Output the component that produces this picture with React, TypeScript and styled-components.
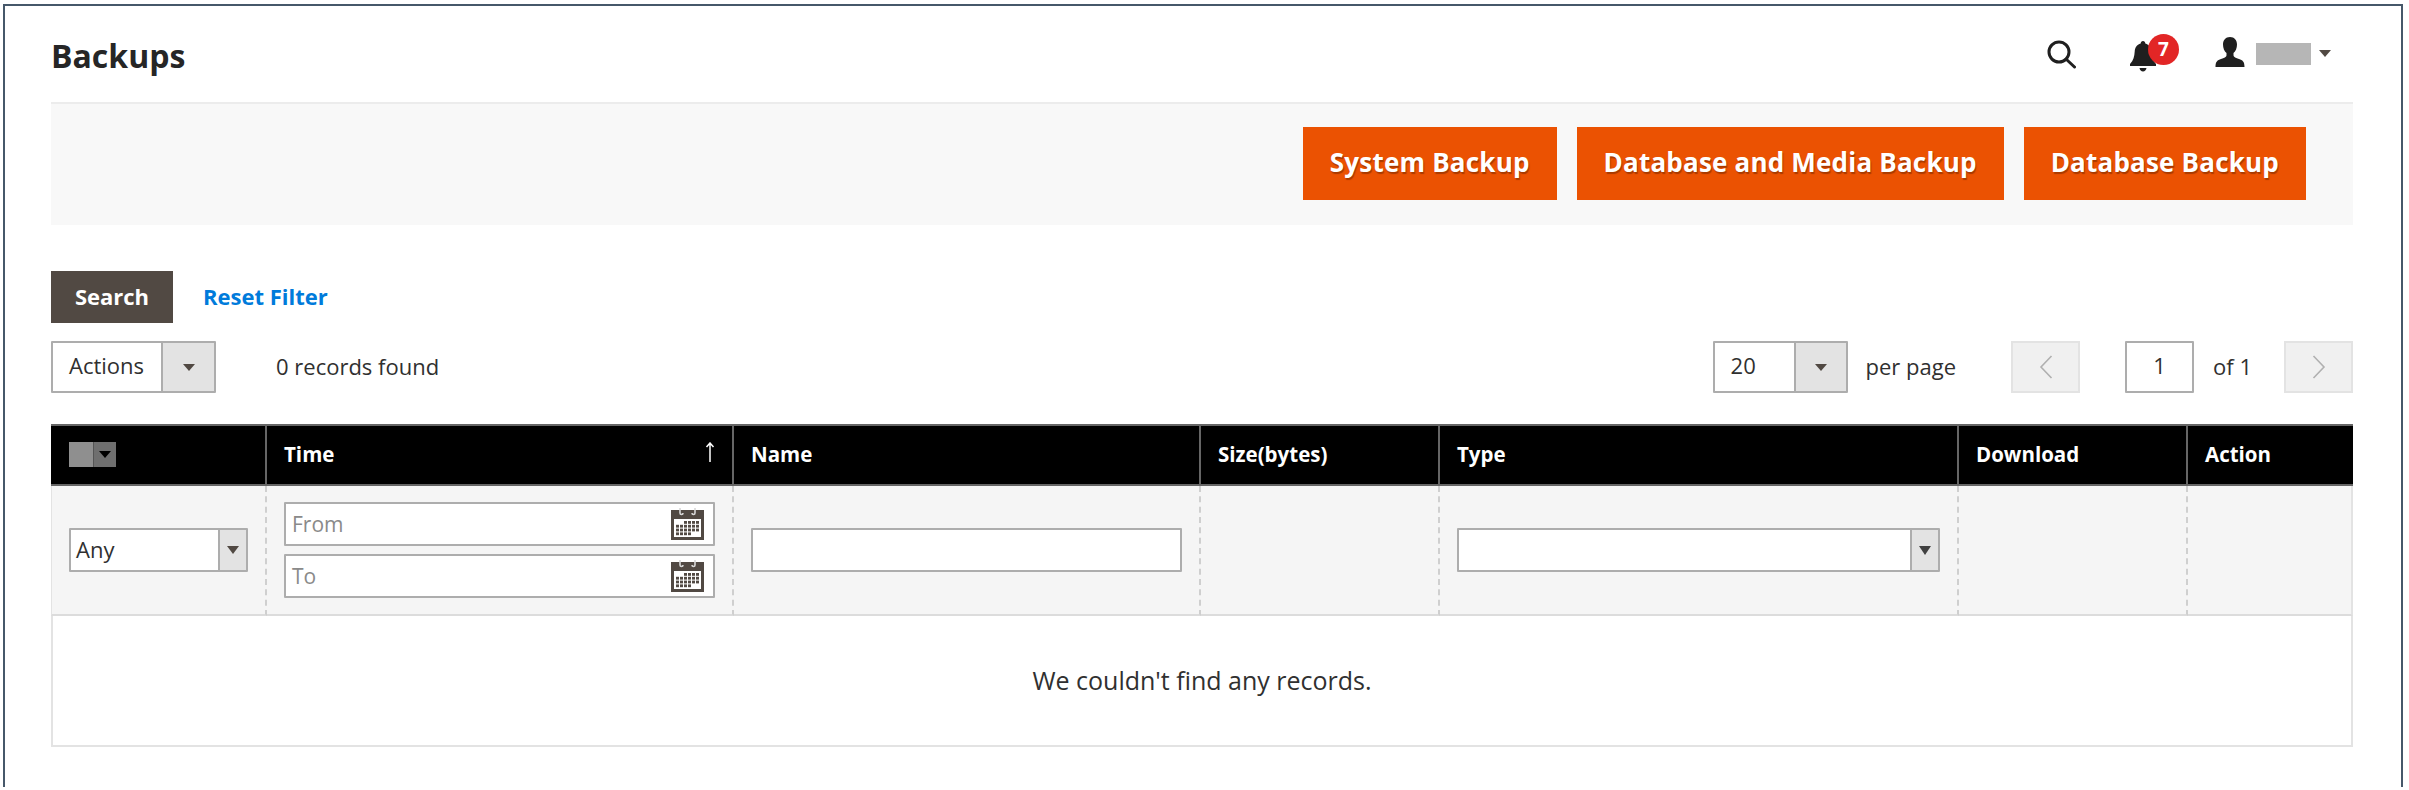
import React from "react";
import styled, { createGlobalStyle } from "styled-components";

const Global = createGlobalStyle`
  html, body { margin: 0; padding: 0; background: #fff; }
  body { font-family: "Open Sans", "Liberation Sans", sans-serif; color: #303030; }
  * { box-sizing: border-box; }
`;

const Frame = styled.div`
  margin: 4px 6px 0 3px;
  height: 783px;
  border: 2px solid #46586a;
  border-bottom: 0;
  padding: 0 48px 0 46px;
  background: #fff;
`;

const Header = styled.header`
  height: 96px;
  display: flex;
  align-items: flex-start;
  justify-content: space-between;
`;

const Title = styled.h1`
  margin: 28px 0 0 0;
  font-size: 32px;
  line-height: 44px;
  font-weight: 700;
  color: #262626;
`;

const Tools = styled.div`
  display: flex;
  align-items: flex-start;
  padding-top: 31px;
  margin-right: 22px;
`;

const SearchTool = styled.svg`
  width: 29px;
  height: 29px;
  margin: 3px 54px 0 0;
`;

const BellWrap = styled.div`
  position: relative;
  width: 26px;
  height: 31px;
  margin: 4px 59px 0 0;
`;

const Badge = styled.span`
  position: absolute;
  left: 18px;
  top: -7px;
  width: 31px;
  height: 31px;
  border-radius: 50%;
  background: #e22626;
  color: #fff;
  font-size: 19px;
  font-weight: 700;
  line-height: 31px;
  text-align: center;
`;

const UserIcon = styled.svg`
  width: 30px;
  height: 30px;
`;

const UserName = styled.span`
  width: 55px;
  height: 22px;
  margin: 6px 8px 0 11px;
  background: #b6b6b6;
`;

const Caret = styled.span<{ $w?: number; $h?: number; $c?: string }>`
  width: 0;
  height: 0;
  flex: none;
  border-left: ${(p) => p.$w ?? 6}px solid transparent;
  border-right: ${(p) => p.$w ?? 6}px solid transparent;
  border-top: ${(p) => p.$h ?? 7}px solid ${(p) => p.$c ?? "#514943"};
`;

const UserCaret = styled(Caret)`
  margin-top: 13px;
`;

const Toolbar = styled.div`
  height: 123px;
  border-top: 2px solid #ececec;
  background: #f8f8f8;
  display: flex;
  justify-content: flex-end;
  align-items: flex-start;
  gap: 20px;
  padding: 23px 47px 0 0;
`;

const PrimaryButton = styled.button`
  height: 73px;
  padding: 0 27px 3px;
  border: 0;
  background: #eb5202;
  color: #fff;
  font: 700 26px/1 "Open Sans", sans-serif;
  letter-spacing: 0.2px;
  text-shadow: 1px 2px 1px #a93a00;
  white-space: nowrap;
`;

const SearchRow = styled.div`
  margin-top: 46px;
  height: 52px;
  display: flex;
  align-items: center;
  gap: 30px;
`;

const SearchButton = styled.button`
  width: 122px;
  height: 52px;
  padding: 0 0 3px;
  border: 1px solid #514943;
  background: #514943;
  color: #fff;
  font: 700 22px/1 "Open Sans", sans-serif;
`;

const ResetLink = styled.a`
  color: #007bdb;
  font-size: 22px;
  font-weight: 700;
  margin-top: -3px;
`;

const ActionRow = styled.div`
  margin-top: 18px;
  height: 52px;
  display: flex;
  align-items: center;
  font-size: 22px;
`;

const Records = styled.span`
  margin: -3px 0 0 60px;
`;

const Pager = styled.div`
  margin-left: auto;
  display: flex;
  align-items: center;
`;

const SelectBox = styled.div<{ $w?: number; $h: number; $arrow: number }>`
  display: flex;
  width: ${(p) => (p.$w ? `${p.$w}px` : "100%")};
  height: ${(p) => p.$h}px;
  border: 2px solid #adadad;
  border-radius: 1px;
  background: #fff;
  & > span:last-child {
    width: ${(p) => p.$arrow}px;
  }
`;

const SelectValue = styled.span<{ $pad: number }>`
  flex: 1;
  padding-left: ${(p) => p.$pad}px;
  font-size: 22px;
  line-height: ${(p) => (p.$pad > 10 ? 44 : 38)}px;
  color: #303030;
`;

const SelectArrow = styled.span`
  flex: none;
  display: flex;
  align-items: center;
  justify-content: center;
  background: #e3e3e3;
  border-left: 2px solid #adadad;
`;

const PerPage = styled.span`
  margin: -3px 55px 0 18px;
`;

const PageButton = styled.span`
  width: 69px;
  height: 52px;
  display: flex;
  align-items: center;
  justify-content: center;
  background: #f0f0f0;
  border: 2px solid #e3e3e3;
`;

const PageInput = styled.span`
  width: 69px;
  height: 52px;
  margin-left: 45px;
  border: 2px solid #adadad;
  border-radius: 1px;
  text-align: center;
  line-height: 44px;
`;

const OfText = styled.span`
  margin: -3px 32px 0 19px;
`;

const Table = styled.table`
  margin-top: 31px;
  width: 2302px;
  table-layout: fixed;
  border-collapse: separate;
  border-spacing: 0;
`;

const HeadCell = styled.th`
  position: relative;
  height: 62px;
  padding: 0 17px 2px;
  background: #000;
  color: #fff;
  font-size: 20.5px;
  font-weight: 700;
  text-align: left;
  border-top: 2px solid #666;
  border-bottom: 2px solid #666;
  border-right: 2px solid #666;
  &:first-child { padding-left: 18px; }
  &:last-child { border-right: 0; }
`;

const SortArrow = styled.svg`
  position: absolute;
  right: 17px;
  top: 16px;
  width: 10px;
  height: 20px;
`;

const Master = styled.div`
  display: flex;
  width: 47px;
  height: 25px;
`;

const MasterBox = styled.span`
  width: 24px;
  background: #8f8f8f;
`;

const MasterArrow = styled.span`
  flex: 1;
  display: flex;
  align-items: center;
  justify-content: center;
  background: #6f6f6f;
  border-left: 1px solid #555;
`;

const FilterCell = styled.td`
  height: 130px;
  padding: 0 17px;
  background: #f5f5f5;
  vertical-align: middle;
  border-right: 2px dashed #cfcfcf;
  border-bottom: 2px solid #dcdcdc;
  &:first-child { border-left: 1px solid #e3e3e3; }
  &:last-child { border-right: 2px solid #e3e3e3; }
`;

const DateStack = styled.div`
  display: flex;
  flex-direction: column;
  gap: 8px;
`;

const DateField = styled.div`
  height: 44px;
  display: flex;
  align-items: center;
  justify-content: space-between;
  padding: 0 9px 0 6px;
  border: 2px solid #adadad;
  border-radius: 1px;
  background: #fff;
  color: #8a8a8a;
  font-size: 21px;
`;

const TextField = styled.div`
  height: 44px;
  border: 2px solid #adadad;
  border-radius: 1px;
  background: #fff;
`;

const EmptyCell = styled.td`
  height: 131px;
  padding-bottom: 3px;
  text-align: center;
  font-size: 25px;
  color: #303030;
  border: 2px solid #e3e3e3;
  border-top: 0;
`;

const Chevron = ({ left }: { left?: boolean }) => (
  <svg width="14" height="24" viewBox="0 0 14 24" fill="none" stroke="#b0b0b0" strokeWidth="1.6">
    <path d={left ? "M12.5 1 2 12l10.5 11" : "M1.5 1 12 12 1.5 23"} />
  </svg>
);

const Calendar = () => (
  <svg width="33" height="32" viewBox="0 0 33 32">
    <rect x="0" y="2" width="33" height="30" fill="#514943" />
    <rect x="3" y="11" width="27" height="18" fill="#fff" />
    <path d="M9 0v5a1.500 1.500 0 0 0 3 0M24 0v5a1.500 1.500 0 0 1-3 0" stroke="#d8d8d8" strokeWidth="1.600" fill="none" />
    <g fill="#514943">
      {[13, 16.8, 20.6, 24.4].map((y, r) =>
        [5, 9, 13, 17, 21, 25].map((x, c) =>
          (r === 0 && c < 2) || (r === 3 && c > 3) ? null : <rect key={`${r}-${c}`} x={x} y={y} width="3" height="2.800" />
        )
      )}
    </g>
  </svg>
);

const columns = [216, 467, 467, 239, 519, 229, 165];

export default function App() {
  return (
    <>
      <Global />
      <Frame>
        <Header>
          <Title>Backups</Title>
          <Tools>
            <SearchTool viewBox="0 0 29 29" fill="none" stroke="#1f1f1f" strokeWidth="3">
              <circle cx="12" cy="12" r="10" />
              <path d="m19 19 8.500 8" strokeLinecap="round" />
            </SearchTool>
            <BellWrap>
              <svg width="26" height="31" viewBox="0 0 26 31" fill="#1f1f1f">
                <path d="M13 0c1.400 0 2.300.9 2.300 2.400 4 1.100 5.700 4 6 8.100.3 4.700 1.200 9 4.700 12.500v2H0v-2c3.500-3.500 4.400-7.800 4.700-12.500C5 6.400 6.700 3.500 10.700 2.400 10.700.9 11.600 0 13 0Z" />
                <path d="M9.500 27h7c-.4 2.200-1.700 3.500-3.500 3.500S9.900 29.200 9.500 27Z" />
              </svg>
              <Badge>7</Badge>
            </BellWrap>
            <UserIcon viewBox="0 0 30 30" fill="#1f1f1f">
              <path d="M15 0c4.500 0 7 3.300 7 7.500 0 3.500-1.300 6.700-3.500 8.500v2.500c0 1.500 2.500 2.500 5.500 3.500 3.500 1.200 5.500 2.500 5.500 8H.5c0-5.500 2-6.800 5.500-8 3-1 5.500-2 5.500-3.500V16C9.300 14.200 8 11 8 7.500 8 3.300 10.500 0 15 0Z" />
            </UserIcon>
            <UserName />
            <UserCaret />
          </Tools>
        </Header>
        <Toolbar>
          <PrimaryButton>System Backup</PrimaryButton>
          <PrimaryButton>Database and Media Backup</PrimaryButton>
          <PrimaryButton>Database Backup</PrimaryButton>
        </Toolbar>
        <SearchRow>
          <SearchButton>Search</SearchButton>
          <ResetLink>Reset Filter</ResetLink>
        </SearchRow>
        <ActionRow>
          <SelectBox $w={165} $h={52} $arrow={53}>
            <SelectValue $pad={16}>Actions</SelectValue>
            <SelectArrow><Caret /></SelectArrow>
          </SelectBox>
          <Records>0 records found</Records>
          <Pager>
            <SelectBox $w={135} $h={52} $arrow={52}>
              <SelectValue $pad={16}>20</SelectValue>
              <SelectArrow><Caret /></SelectArrow>
            </SelectBox>
            <PerPage>per page</PerPage>
            <PageButton><Chevron left /></PageButton>
            <PageInput>1</PageInput>
            <OfText>of 1</OfText>
            <PageButton><Chevron /></PageButton>
          </Pager>
        </ActionRow>
        <Table>
          <colgroup>
            {columns.map((w, i) => (
              <col key={i} width={w} />
            ))}
          </colgroup>
          <thead>
            <tr>
              <HeadCell>
                <Master>
                  <MasterBox />
                  <MasterArrow><Caret $c="#000" /></MasterArrow>
                </Master>
              </HeadCell>
              <HeadCell>
                Time
                <SortArrow viewBox="0 0 10 20" fill="none" stroke="#fff" strokeWidth="1.5">
                  <path d="M5 20V1M1.500 5 5 1l3.500 4" />
                </SortArrow>
              </HeadCell>
              <HeadCell>Name</HeadCell>
              <HeadCell>Size(bytes)</HeadCell>
              <HeadCell>Type</HeadCell>
              <HeadCell>Download</HeadCell>
              <HeadCell>Action</HeadCell>
            </tr>
          </thead>
          <tbody>
            <tr>
              <FilterCell>
                <SelectBox $h={44} $arrow={28}>
                  <SelectValue $pad={5}>Any</SelectValue>
                  <SelectArrow><Caret $w={6} $h={8} /></SelectArrow>
                </SelectBox>
              </FilterCell>
              <FilterCell>
                <DateStack>
                  <DateField>From<Calendar /></DateField>
                  <DateField>To<Calendar /></DateField>
                </DateStack>
              </FilterCell>
              <FilterCell><TextField /></FilterCell>
              <FilterCell />
              <FilterCell>
                <SelectBox $h={44} $arrow={28}>
                  <SelectValue $pad={5} />
                  <SelectArrow><Caret $w={6} $h={9} $c="#414141" /></SelectArrow>
                </SelectBox>
              </FilterCell>
              <FilterCell />
              <FilterCell />
            </tr>
            <tr>
              <EmptyCell colSpan={7}>We couldn't find any records.</EmptyCell>
            </tr>
          </tbody>
        </Table>
      </Frame>
    </>
  );
}
